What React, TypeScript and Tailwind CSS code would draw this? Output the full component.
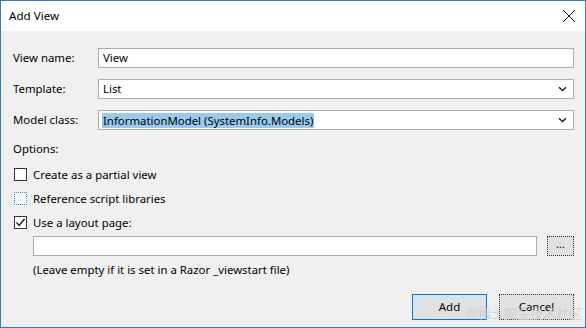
import React from 'react';

const font = { fontFamily: '"Noto Sans", "Segoe UI", "Noto Sans CJK SC", sans-serif' };

const Chevron: React.FC = () => (
  <svg width="9" height="6" viewBox="0 0 9 6" className="mr-[6px]">
    <path d="M1 1.2 L4.5 4.6 L8 1.2" fill="none" stroke="#222" strokeWidth="1.4" />
  </svg>
);

const Field: React.FC<{ label: string; value: string; select?: boolean; selected?: boolean }> = ({ label, value, select, selected }) => (
  <div className="flex h-[20px] items-center">
    <div className="w-[85px] shrink-0 text-[11.4px] text-black">{label}</div>
    <div className="flex h-[20px] flex-1 items-center justify-between border border-[#adadad] bg-white">
      <span className={selected ? 'ml-[3px] bg-[#99c9ef] px-[1px] text-[11.4px] leading-[15px] text-black' : 'ml-[4px] text-[11.4px] text-black'}>
        {value}
      </span>
      {select && <Chevron />}
    </div>
  </div>
);

const Check: React.FC<{ label: string; checked?: boolean; focus?: boolean }> = ({ label, checked, focus }) => (
  <div className="flex h-[13px] items-center gap-[6px]">
    <div
      className={
        focus
          ? 'flex h-[13px] w-[13px] items-center justify-center border border-dotted border-[#2f8ad8] bg-[#f5fafe]'
          : 'flex h-[13px] w-[13px] items-center justify-center border border-[#333] bg-white'
      }
    >
      {checked && (
        <svg width="11" height="11" viewBox="0 0 11 11">
          <path d="M1.5 5.5 L4.2 8.4 L9.6 1.8" fill="none" stroke="#222" strokeWidth="1.5" />
        </svg>
      )}
    </div>
    <span className="text-[11.4px] text-black">{label}</span>
  </div>
);

export default function App() {
  return (
    <div className="flex h-[328px] w-[586px] flex-col border-x border-b border-t border-[#2f7cc0] bg-[#f0f0f0]" style={font}>
      <div className="flex h-[30px] shrink-0 items-center justify-between bg-white pl-[8px] pr-[9px]">
        <span className="text-[11.6px] text-black">Add View</span>
        <svg width="14" height="14" viewBox="0 0 14 14">
          <path d="M1 1 L13 13 M13 1 L1 13" stroke="#111" strokeWidth="1" />
        </svg>
      </div>

      <div className="flex flex-1 flex-col pl-[12px] pr-[11px] pt-[17px]">
        <div className="flex flex-col gap-[11px]">
          <Field label="View name:" value="View" />
          <Field label="Template:" value="List" select />
          <Field label="Model class:" value="InformationModel (SystemInfo.Models)" select selected />
        </div>

        <div className="mt-[11px] text-[11.4px] leading-[16px] text-black">Options:</div>

        <div className="mt-[11px] flex flex-col gap-[11px] pl-[1px]">
          <Check label="Create as a partial view" />
          <Check label="Reference script libraries" focus />
          <Check label="Use a layout page:" checked />
        </div>

        <div className="mt-[7px] flex items-center gap-[10px] pl-[20px]">
          <div className="h-[20px] flex-1 border border-[#adadad] bg-white" />
          <button className="flex h-[20px] w-[27px] items-center justify-center border border-dotted border-[#333] bg-[#e1e1e1] pb-[4px] text-[11px] text-black">
            ...
          </button>
        </div>

        <div className="mt-[6px] pl-[20px] text-[11.4px] leading-[16px] text-black">(Leave empty if it is set in a Razor _viewstart file)</div>

        <div className="mt-[16px] flex items-end justify-end gap-[12px]">
          <button className="h-[26px] w-[75px] border border-[#0078d7] bg-[#e1e1e1] text-[11.4px] text-black">Add</button>
          <div className="flex flex-col items-end">
            <button className="h-[26px] w-[75px] border border-dotted border-[#333] bg-[#e1e1e1] text-[11.4px] text-black">Cancel</button>
          </div>
        </div>
        <div className="-mt-[14px] -mr-[8px] self-end text-[13px] leading-[14px] text-[#cfcfcf] opacity-80">@稀土掘金技术社区</div>
      </div>
    </div>
  );
}
